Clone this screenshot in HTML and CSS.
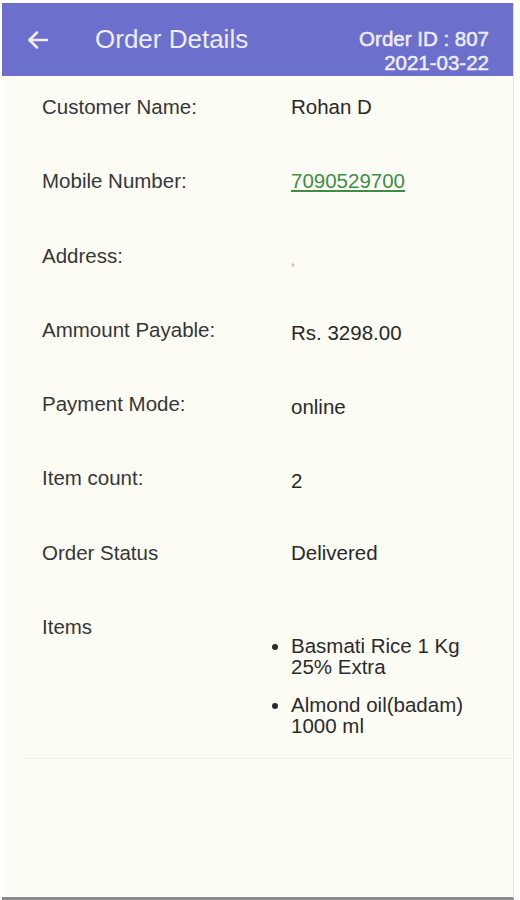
FILE: index.html
```html
<!DOCTYPE html>
<html lang="en">
<head>
    <meta charset="UTF-8">
    <meta name="viewport" content="width=device-width, initial-scale=1.0">
    <title>Order Details</title>
    <link rel="stylesheet" href="styles.css">
</head>
<body>
    <div class="screen">
        <div class="toolbar">
            <span class="back">
                <svg width="24" height="24" viewBox="0 0 24 24" fill="none" stroke="currentColor" stroke-width="2.6" stroke-linecap="round" stroke-linejoin="round">
                    <path d="M21 12H3.5"/>
                    <path d="M11 4.5L3.5 12l7.5 7.5"/>
                </svg>
            </span>
            <span class="title">Order Details</span>
            <div class="order-meta">
                <div>Order ID : 807</div>
                <div>2021-03-22</div>
            </div>
        </div>

        <div class="details">
            <div class="row">
                <div class="label">Customer Name:</div>
                <div class="value">Rohan D</div>
            </div>
            <div class="row">
                <div class="label">Mobile Number:</div>
                <div class="value"><a href="#" class="phone">7090529700</a></div>
            </div>
            <div class="row">
                <div class="label">Address:</div>
                <div class="value faint">,</div>
            </div>
            <div class="row">
                <div class="label">Ammount Payable:</div>
                <div class="value low">Rs. 3298.00</div>
            </div>
            <div class="row">
                <div class="label">Payment Mode:</div>
                <div class="value low">online</div>
            </div>
            <div class="row">
                <div class="label">Item count:</div>
                <div class="value low">2</div>
            </div>
            <div class="row">
                <div class="label">Order Status</div>
                <div class="value">Delivered</div>
            </div>
            <div class="row items-row">
                <div class="label">Items</div>
                <ul class="items">
                    <li>Basmati Rice 1 Kg 25% Extra</li>
                    <li>Almond oil(badam) 1000 ml</li>
                </ul>
            </div>
        </div>
    </div>
</body>
</html>
```

FILE: styles.css
```css
html, body {
    margin: 0;
    padding: 0;
    background: #ffffff;
}
body {
    font-family: "Liberation Sans", Arial, sans-serif;
    color: #2b2b2b;
}
.screen {
    margin: 3px 6px 0 2px;
    height: 894px;
    background: #fdfdf6;
    border-right: 1px solid #e6e8e4;
    border-bottom: 3px solid #8a8a8a;
}
.toolbar {
    height: 73px;
    background: #6c70cc;
    color: #eeeefa;
    display: flex;
    align-items: flex-start;
}
.back {
    width: 24px;
    height: 24px;
    margin: 25px 0 0 24px;
    display: flex;
}
.title {
    font-size: 26px;
    margin: 21px 0 0 45px;
    flex: 1;
}
.order-meta {
    font-size: 20.5px;
    -webkit-text-stroke: 0.5px #eeeefa;
    text-align: right;
    margin: 24px 24px 0 0;
    line-height: 24px;
}
.details {
    font-size: 20.5px;
}
.row {
    display: grid;
    grid-template-columns: 249px 1fr;
    padding: 19px 0 0 40px;
    height: 55.3px;
    line-height: 24px;
}
.label {
    color: #363636;
}
.value {
    color: #282828;
}
.value.low {
    padding-top: 3px;
}
.value.faint {
    color: #999;
    font-size: 14px;
    padding-top: 4px;
}
.phone {
    color: #3e8e45;
    text-decoration: underline;
}
.items-row {
    height: auto;
    padding-bottom: 22px;
    margin-left: 21px;
    padding-left: 19px;
    border-bottom: 1px solid #efefe8;
}
.items {
    margin: 20px 0 0;
    padding: 0 30px 0 0;
    list-style: disc;
    line-height: 21px;
}
.items li {
    margin-bottom: 17px;
}
.items li:last-child {
    margin-bottom: 0;
}
```
